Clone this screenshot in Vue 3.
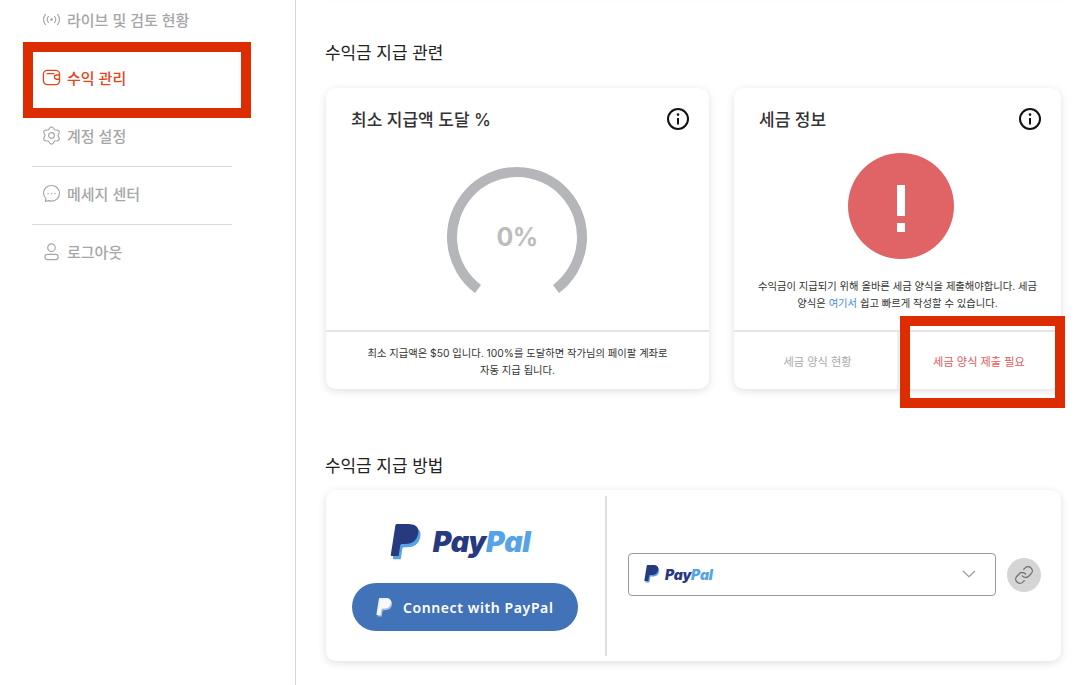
<script setup>
const navItems = [
  { label: '라이브 및 검토 현황', icon: 'live' },
  { label: '수익 관리', icon: 'wallet', active: true },
  { label: '계정 설정', icon: 'gear', rule: true },
  { label: '메세지 센터', icon: 'chat', rule: true },
  { label: '로그아웃', icon: 'user' }
]
</script>

<template>
  <div class="page">
    <aside class="sidebar">
      <ul class="nav">
        <li v-for="item in navItems" :key="item.label" class="nav-item" :class="{ active: item.active, rule: item.rule }">
          <svg class="nav-icon" viewBox="0 0 20 20" fill="none" stroke="currentColor" stroke-width="1.2" stroke-linecap="round" stroke-linejoin="round">
            <template v-if="item.icon === 'live'">
              <circle cx="10" cy="10" r="1.4" fill="currentColor" stroke="none" />
              <path d="M6.8 6.8a5 5 0 0 0 0 6.4M13.2 6.8a5 5 0 0 1 0 6.4" />
              <path d="M3.6 4.6a9 9 0 0 0 0 10.8M16.4 4.6a9 9 0 0 1 0 10.8" />
            </template>
            <template v-else-if="item.icon === 'wallet'">
              <rect x="1.5" y="2.5" width="17" height="15" rx="4" stroke-width="1.4" />
              <path d="M5.5 6h7M18.3 7.4h-3a2 2 0 0 0 0 4.4h3" stroke-width="1.4" />
            </template>
            <template v-else-if="item.icon === 'gear'">
              <circle cx="10" cy="10" r="3" />
              <path d="M6.65 4.2Q10 -2.5 13.35 4.2Q20.83 3.75 16.7 10Q20.83 16.25 13.35 15.8Q10 22.5 6.65 15.8Q-.83 16.25 3.3 10Q-.83 3.75 6.65 4.2z" />
            </template>
            <template v-else-if="item.icon === 'chat'">
              <path d="M10 1.6c4.8 0 8.4 3.6 8.4 8.2S14.8 18 10 18c-1.1 0-2-.2-3-.5l-3.6.9.8-3A8 8 0 0 1 1.6 9.8C1.6 5.2 5.2 1.6 10 1.6z" />
              <path d="M6.4 10h.1M10 10h.1M13.6 10h.1" stroke-width="1.4" />
            </template>
            <template v-else>
              <circle cx="10" cy="6" r="4" />
              <rect x="3" y="13" width="14" height="5.6" rx="2.8" />
            </template>
          </svg>
          <span>{{ item.label }}</span>
        </li>
      </ul>
      <div class="mark mark-nav"></div>
    </aside>

    <main class="main">
      <div class="prev-card"></div>

      <h2 class="section-title first">수익금 지급 관련</h2>
      <div class="cards">
        <section class="card">
          <header class="card-head">
            <h3>최소 지급액 도달 %</h3>
            <svg class="info" viewBox="0 0 22 22" fill="none" stroke="#111" stroke-width="2">
              <circle cx="11" cy="11" r="10" />
              <path d="M11 10v6.4" />
              <circle cx="11" cy="6.6" r="1.3" fill="#111" stroke="none" />
            </svg>
          </header>
          <div class="gauge">
            <svg width="140" height="140" viewBox="0 0 140 140" fill="none">
              <path d="M31 122A65 65 0 1 1 109 122" stroke="#b5b6b9" stroke-width="10" />
            </svg>
            <span class="gauge-value">0%</span>
          </div>
          <p class="card-foot">최소 지급액은 $50 입니다. 100%를 도달하면 작가님의 페이팔 계좌로<br />자동 지급 됩니다.</p>
        </section>

        <section class="card">
          <header class="card-head">
            <h3>세금 정보</h3>
            <svg class="info" viewBox="0 0 22 22" fill="none" stroke="#111" stroke-width="2">
              <circle cx="11" cy="11" r="10" />
              <path d="M11 10v6.4" />
              <circle cx="11" cy="6.6" r="1.3" fill="#111" stroke="none" />
            </svg>
          </header>
          <div class="alert"><span class="bar"></span><span class="dot"></span></div>
          <p class="tax-text">수익금이 지급되기 위해 올바른 세금 양식을 제출해야합니다. 세금<br />양식은 <a class="link">여기서</a> 쉽고 빠르게 작성할 수 있습니다.</p>
          <div class="tax-foot">
            <div class="tax-cell muted">세금 양식 현황</div>
            <div class="tax-cell alert-text">세금 양식 제출 필요</div>
          </div>
          <div class="mark mark-tax"></div>
        </section>
      </div>

      <h2 class="section-title second">수익금 지급 방법</h2>
      <section class="card pay-card">
        <div class="pay-left">
          <div class="pp-logo">
            <svg class="pp-mark" viewBox="0 0 24 24">
              <path fill="#56a3e8" transform="translate(1.4 2.1)" d="M7.076 21.337H2.47a.641.641 0 0 1-.633-.74L4.944.901C5.026.382 5.474 0 5.998 0h7.46c2.57 0 4.578.543 5.69 1.81 1.01 1.15 1.304 2.42 1.012 4.287-.023.143-.047.288-.077.437-.983 5.05-4.349 6.797-8.647 6.797h-2.19c-.524 0-.968.382-1.05.9l-1.12 7.106z" />
              <path fill="#27397f" d="M7.076 21.337H2.47a.641.641 0 0 1-.633-.74L4.944.901C5.026.382 5.474 0 5.998 0h7.46c2.57 0 4.578.543 5.69 1.81 1.01 1.15 1.304 2.42 1.012 4.287-.023.143-.047.288-.077.437-.983 5.05-4.349 6.797-8.647 6.797h-2.19c-.524 0-.968.382-1.05.9l-1.12 7.106z" />
            </svg>
            <span class="pp-word"><span class="pp-dark">Pay</span><span class="pp-light">Pal</span></span>
          </div>
          <button class="connect" type="button">
            <svg class="pp-btn" viewBox="0 0 24 24">
              <path fill="#fff" opacity=".55" transform="translate(1.4 2.1)" d="M7.076 21.337H2.47a.641.641 0 0 1-.633-.74L4.944.901C5.026.382 5.474 0 5.998 0h7.46c2.57 0 4.578.543 5.69 1.81 1.01 1.15 1.304 2.42 1.012 4.287-.023.143-.047.288-.077.437-.983 5.05-4.349 6.797-8.647 6.797h-2.19c-.524 0-.968.382-1.05.9l-1.12 7.106z" />
              <path fill="#fff" opacity=".9" d="M7.076 21.337H2.47a.641.641 0 0 1-.633-.74L4.944.901C5.026.382 5.474 0 5.998 0h7.46c2.57 0 4.578.543 5.69 1.81 1.01 1.15 1.304 2.42 1.012 4.287-.023.143-.047.288-.077.437-.983 5.05-4.349 6.797-8.647 6.797h-2.19c-.524 0-.968.382-1.05.9l-1.12 7.106z" />
            </svg>
            <span>Connect with PayPal</span>
          </button>
        </div>
        <div class="pay-right">
          <div class="select">
            <svg class="pp-small" viewBox="0 0 24 24">
              <path fill="#56a3e8" transform="translate(1.4 2.1)" d="M7.076 21.337H2.47a.641.641 0 0 1-.633-.74L4.944.901C5.026.382 5.474 0 5.998 0h7.46c2.57 0 4.578.543 5.69 1.81 1.01 1.15 1.304 2.42 1.012 4.287-.023.143-.047.288-.077.437-.983 5.05-4.349 6.797-8.647 6.797h-2.19c-.524 0-.968.382-1.05.9l-1.12 7.106z" />
              <path fill="#27397f" d="M7.076 21.337H2.47a.641.641 0 0 1-.633-.74L4.944.901C5.026.382 5.474 0 5.998 0h7.46c2.57 0 4.578.543 5.69 1.81 1.01 1.15 1.304 2.42 1.012 4.287-.023.143-.047.288-.077.437-.983 5.05-4.349 6.797-8.647 6.797h-2.19c-.524 0-.968.382-1.05.9l-1.12 7.106z" />
            </svg>
            <span class="pp-word small"><span class="pp-dark">Pay</span><span class="pp-light">Pal</span></span>
            <svg class="chevron" viewBox="0 0 14 8" fill="none" stroke="#9a9a9a" stroke-width="1.2"><path d="M1 1l6 5.6L13 1" /></svg>
          </div>
          <div class="link-btn">
            <svg viewBox="0 0 24 24" fill="none" stroke="#6f6f6f" stroke-width="1.5" stroke-linecap="round" stroke-linejoin="round">
              <path d="M10 13a5 5 0 0 0 7.54.54l3-3a5 5 0 0 0-7.07-7.07l-1.72 1.71" />
              <path d="M14 11a5 5 0 0 0-7.54-.54l-3 3a5 5 0 0 0 7.07 7.07l1.71-1.71" />
            </svg>
          </div>
        </div>
      </section>
    </main>
  </div>
</template>

<style>
html, body { margin: 0; background: #fff; overflow: hidden; }
</style>

<style scoped>
* { box-sizing: border-box; }
.page {
  display: flex;
  width: 1081px;
  height: 685px;
  overflow: hidden;
  background: #fff;
  font-family: Inter, "Noto Sans CJK KR", sans-serif;
  color: #333;
}
.sidebar {
  position: relative;
  width: 296px;
  flex: none;
  border-right: 1px solid #d6d6d8;
}
.nav {
  list-style: none;
  margin: -10px 0 0 32px;
  padding: 0;
  width: 200px;
}
.nav-item {
  position: relative;
  display: flex;
  align-items: center;
  gap: 6px;
  height: 58px;
  padding-left: 10px;
  font-size: 15px;
  font-weight: 500;
  color: #a5a6a9;
}
.nav-item.rule::after {
  content: "";
  position: absolute;
  left: 0;
  right: 0;
  bottom: -3px;
  height: 1px;
  background: #d9d9dd;
}
.nav-item.active { color: #e4461c; }
.nav-icon { width: 19px; height: 19px; flex: none; }
.mark {
  position: absolute;
  border: 10px solid #dd2c00;
  pointer-events: none;
}
.mark-nav { left: 23px; top: 42px; width: 228px; height: 76px; }
.mark-tax { left: 166px; top: 228px; width: 165px; height: 92px; }

.main { flex: 1; padding-left: 30px; min-width: 0; }
.prev-card {
  height: 0;
  width: 735px;
  box-shadow: 0 -3px 10px 2px rgba(0, 0, 0, .07);
  transform: translateY(-3px);
}
.section-title {
  margin: 0 0 0 -1px;
  font-size: 16.9px;
  line-height: 24px;
  font-weight: 400;
  color: #222;
}
.section-title.first { padding-top: 41px; }
.section-title.second { margin-top: 65px; }
.cards {
  display: grid;
  grid-template-columns: 383px 327px;
  gap: 25px;
  margin: 23px 0 0;
}
.card {
  position: relative;
  height: 301px;
  background: #fff;
  border-radius: 10px;
  box-shadow: 0 2px 9px rgba(0, 0, 0, .13);
  display: flex;
  flex-direction: column;
}
.card-head {
  display: flex;
  align-items: center;
  justify-content: space-between;
  padding: 9px 20px 0 25px;
  height: 51px;
}
.card-head h3 {
  margin: 0;
  font-size: 17px;
  font-weight: 500;
  color: #333;
}
.info { width: 22px; height: 22px; flex: none; margin-top: 1px; }
.gauge {
  position: relative;
  align-self: center;
  width: 140px;
  height: 140px;
  margin: 28px 0 0 -1px;
}
.gauge svg { display: block; }
.gauge-value {
  position: absolute;
  inset: 0;
  display: flex;
  align-items: center;
  justify-content: center;
  font-size: 25px;
  font-weight: 700;
  letter-spacing: -.6px;
  color: #bcbdc0;
}
.card-foot {
  margin: 23px 0 0;
  flex: 1;
  border-top: 2px solid #e4e4e4;
  padding-top: 13px;
  font-size: 10.3px;
  line-height: 17px;
  text-align: center;
  color: #333;
}
.alert {
  position: relative;
  align-self: center;
  width: 106px;
  height: 106px;
  margin: 14px 0 0 6px;
  border-radius: 50%;
  background: #e06365;
  flex: none;
}
.bar, .dot { position: absolute; left: 49px; width: 8px; background: #fff; }
.bar { top: 32px; height: 31px; }
.dot { top: 70px; height: 9px; }
.tax-text {
  margin: 19px 0 0;
  font-size: 10.3px;
  line-height: 17px;
  text-align: center;
  color: #333;
}
.link { color: #3d8bf0; }
.tax-foot {
  display: grid;
  grid-template-columns: 165px 1fr;
  margin-top: 18px;
  flex: 1;
  border-top: 2px solid #e4e4e4;
}
.tax-cell {
  display: flex;
  align-items: center;
  justify-content: center;
  font-size: 11.2px;
}
.tax-cell.muted { color: #a9a9ab; border-right: 2px solid #eee; padding-left: 4px; }
.alert-text { color: #e4595c; padding-right: 2px; }

.pay-card {
  display: flex;
  flex-direction: row;
  width: 735px;
  height: 171px;
  margin-top: 12px;
  align-items: stretch;
}
.pay-left {
  width: 281px;
  margin: 6px 0 5px;
  border-right: 2px solid #dfdfdf;
  display: flex;
  flex-direction: column;
  align-items: center;
  padding-top: 28px;
  flex: none;
}
.pp-logo { display: flex; align-items: center; gap: 9px; margin-left: -13px; height: 36px; }
.pp-mark { width: 36px; height: 36px; flex: none; }
.pp-word {
  font-family: Inter, sans-serif;
  font-size: 28.5px;
  line-height: 1;
  font-weight: 900;
  font-style: italic;
  letter-spacing: -.3px;
}
.pp-word.small { font-size: 14px; letter-spacing: -.2px; margin: 2px 0 0 1px; }
.pp-dark { color: #27397f; }
.pp-light { color: #56a3e8; }
.connect {
  display: flex;
  align-items: center;
  gap: 9px;
  width: 226px;
  height: 48px;
  margin: 23px 0 0 -1px;
  padding: 0 0 0 23px;
  border: 0;
  border-radius: 24px;
  background: #4272b8;
  color: #fff;
  font-family: "Noto Sans", sans-serif;
  font-size: 14px;
  font-weight: 600;
  letter-spacing: .6px;
}
.pp-btn { width: 19px; height: 19px; flex: none; }
.pay-right {
  flex: 1;
  display: flex;
  align-items: center;
  gap: 11px;
  padding: 0 20px 0 21px;
  margin-top: -3px;
}
.select {
  display: flex;
  align-items: center;
  gap: 3px;
  width: 368px;
  height: 43px;
  padding: 0 19px 0 14px;
  border: 1px solid #9a9a9a;
  border-radius: 4px;
  flex: none;
}
.pp-small { width: 18px; height: 18px; flex: none; }
.chevron { width: 14px; height: 8px; margin-left: auto; flex: none; }
.link-btn {
  width: 34px;
  height: 34px;
  border-radius: 50%;
  background: #d5d5d5;
  display: flex;
  align-items: center;
  justify-content: center;
  flex: none;
  margin-top: 2px;
}
.link-btn svg { width: 20px; height: 20px; }
</style>
